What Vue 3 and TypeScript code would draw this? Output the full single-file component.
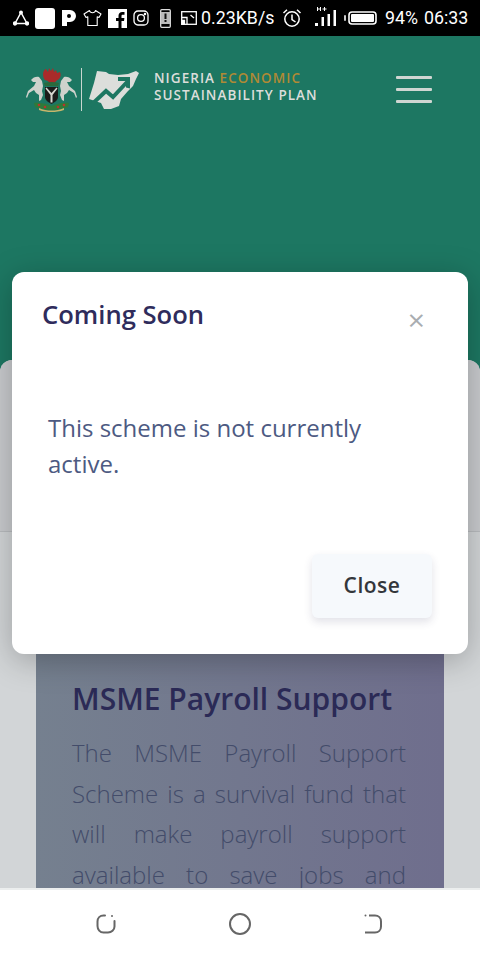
<template>
  <div class="screen">
    <div class="status-bar">
      <svg class="ico" width="16" height="16" viewBox="0 0 16 16" fill="none" stroke="#fff" stroke-width="1.5">
        <path d="M8 2.500 14 13.500H2Z" />
        <circle cx="8" cy="2.500" r="1.200" fill="#fff" />
        <circle cx="2" cy="13.500" r="1.400" fill="#fff" />
        <circle cx="14" cy="13.500" r="1.400" fill="#fff" />
      </svg>
      <span class="white-square"></span>
      <svg class="ico" width="16" height="18" viewBox="0 0 16 18">
        <path fill="#fff" fill-rule="evenodd" d="M1 1h8a6 6 0 0 1 6 6 6 6 0 0 1-6 6H6v4H1ZM8 5a2 2 0 1 0 0 4 2 2 0 0 0 0-4Z" />
      </svg>
      <svg class="ico" width="19" height="18" viewBox="0 0 19 18" fill="none" stroke="#fff" stroke-width="1.1" stroke-linejoin="round">
        <path d="M6.500 1.500 1 5l2 3.500 1.800-.8V16.500h9.400V7.700l1.800.8L18 5l-5.500-3.500c-.6 3-5.400 3-6 0Z" />
      </svg>
      <svg class="ico" width="19" height="19" viewBox="0 0 19 19">
        <path fill="#fff" fill-rule="evenodd" d="M0 0h19v19h-5.500v-7H16l.4-3h-2.900V7.200c0-.9.300-1.400 1.500-1.400h1.500V3.100c-.7-.1-1.500-.1-2.200-.1-2.300 0-3.800 1.300-3.800 3.800V9H8v3h2.500v7H0Z" />
      </svg>
      <svg class="ico" width="16" height="16" viewBox="0 0 16 16" fill="none" stroke="#fff" stroke-width="1.3">
        <rect x="1" y="1" width="14" height="14" rx="4" />
        <circle cx="8" cy="8" r="3.400" />
        <circle cx="12" cy="4" r=".6" fill="#fff" />
      </svg>
      <svg class="ico phone" width="11" height="19" viewBox="0 0 11 19">
        <rect x=".7" y=".7" width="9.600" height="17.600" rx="1" fill="none" stroke="#ddd" stroke-width="1.300" />
        <rect x="1" y="3" width="9" height="12" fill="#bbb" />
        <path d="M4.500 4.500h2v5.500h-2ZM4.500 11h2v2h-2Z" fill="#111" />
      </svg>
      <svg class="ico cast" width="16" height="14" viewBox="0 0 16 14" fill="none" stroke="#fff" stroke-width="1.300">
        <rect x=".7" y=".7" width="14.600" height="12.600" />
        <path d="M1 6.500 6 6.500v6.500M9.500 4 13 7" />
        <path d="M1 9.500h2.500v3.500H1Z" fill="#fff" />
      </svg>
      <span class="status-text speed">0.23KB/s</span>
      <svg class="ico alarm" width="20" height="20" viewBox="0 0 20 20" fill="none" stroke="#fff" stroke-width="1.500">
        <circle cx="10" cy="11" r="7.200" />
        <path d="M10 6.500V11.500L13.500 14" />
        <path d="M1.500 5 5 1.800M18.500 5 15 1.800" />
      </svg>
      <svg class="ico signal" width="23" height="22" viewBox="0 0 23 22" fill="#fff">
        <rect x="2" y="16" width="3" height="3" />
        <rect x="8.500" y="10" width="2.500" height="9" />
        <rect x="14.500" y="7" width="2.500" height="12" />
        <rect x="20.500" y="3" width="2.500" height="16" />
        <path d="M4 0h1v1.500h2V0h1v4H7V2.500H5V4H4ZM9.500 1.500H11V0h1v1.500h1.500v1H12V4h-1V2.500H9.500Z" />
      </svg>
      <svg class="ico battery" width="33" height="14" viewBox="0 0 33 14">
        <rect x="0" y="4" width="2" height="6" rx="1" fill="#ccc" />
        <rect x="5" y="1" width="27" height="12" rx="3" fill="none" stroke="#fff" stroke-width="1.600" />
        <rect x="7" y="3" width="23" height="8" rx="1" fill="#fff" />
      </svg>
      <span class="status-text level">94%</span>
      <span class="status-text clock">06:33</span>
    </div>

    <div class="page">
      <header class="top-bar">
        <div class="brand">
          <!-- 国徽：简化绘制 -->
          <svg class="arms" width="52" height="46" viewBox="0 0 52 46">
            <path d="M18 7c0-3 2-5 3-5l2 3 1-4 2 3 2-3 1 4 2-2 1 3 3-1c1 2 1 5-1 7l-3 2-2 3-2-1-2 1-2-3-3-1c-1-1-2-3-2-6Z" fill="#a92b2a" />
            <path d="M19 16c5-1.500 10-1.500 15 0l-1 3H20Z" fill="#2a6a3c" />
            <g fill="#cfd2cc">
              <path id="horse" d="M6 13C8 10 12 9 14 10L17 14 18 19 17 24 18 28 16 33 14 34V28L11 26 9 23 4 26 2 31 1 30 3 24 9 19 11 15 8 15Z" />
              <path transform="translate(53 0) scale(-1 1)" d="M6 13C8 10 12 9 14 10L17 14 18 19 17 24 18 28 16 33 14 34V28L11 26 9 23 4 26 2 31 1 30 3 24 9 19 11 15 8 15Z" />
            </g>
            <path d="M20 20h13v10c0 3-3 5-6.500 7-3.500-2-6.500-4-6.500-7Z" fill="#1b1c1a" />
            <path d="M21.500 20.500l5 5.500 5-5.500 1 1-5 6.500v7.500h-2V28l-5-6.500Z" fill="#d5d7d0" />
            <path d="M9 36c6-1 12 1 17.500 3 5.500-2 11.500-4 17.500-3l-1 4c-5 2-11 3-16.500 3s-11.500-1-16.500-3Z" fill="#2f7a3a" />
            <circle cx="14" cy="38" r="1.300" fill="#b8322c" />
            <circle cx="20" cy="40" r="1.300" fill="#b8322c" />
            <circle cx="33" cy="40" r="1.300" fill="#b8322c" />
            <circle cx="39" cy="38" r="1.300" fill="#b8322c" />
            <path d="M14 41c4 2 8.500 2.500 12.500 2.500s8.500-.5 12.500-2.500v2c-4 1.500-8.500 2-12.500 2s-8.500-.5-12.500-2Z" fill="#c8b66a" />
          </svg>
          <span class="brand-rule"></span>
          <svg class="map" width="50" height="40" viewBox="0 0 50 40">
            <path d="M8 1 17 2 20 4 29 5 39 4 47 1 50 3 47 9 44 16 39 21 32 29 30 36 22 39 15 39 12 33 0 29 5 13Z" fill="#dcdedb" />
            <path d="M1 36 17 21l7 6 15-16" fill="none" stroke="#1d7762" stroke-width="4" />
            <path d="M29 7h12v11.500l-4-1V11h-8Z" fill="#1d7762" />
          </svg>
          <div class="brand-name">
            <div>NIGERIA <span class="accent">ECONOMIC</span></div>
            <div>SUSTAINABILITY PLAN</div>
          </div>
        </div>
        <div class="burger">
          <span></span>
          <span></span>
          <span></span>
        </div>
      </header>

      <section class="sheet">
        <div class="sheet-top"></div>
        <article class="scheme-card">
          <h2>MSME Payroll Support</h2>
          <p>
            The MSME Payroll Support Scheme is a survival fund that will make payroll support
            available to save jobs and protect businesses across the country.
          </p>
        </article>
      </section>

      <div class="modal">
        <div class="modal-head">
          <h3>Coming Soon</h3>
          <span class="modal-x">×</span>
        </div>
        <p class="modal-body">This scheme is not currently active.</p>
        <div class="modal-foot">
          <button class="close-btn" type="button">Close</button>
        </div>
      </div>
    </div>

    <div class="nav-bar">
      <svg width="22" height="22" viewBox="0 0 22 22" fill="none" stroke="#666" stroke-width="2">
        <path d="M10 2.500H8.500C5 2.500 2.500 5 2.500 8.500V13C2.500 16.500 5 19.500 8.500 19.500H13C16.500 19.500 19.500 17 19.500 13.500V8" stroke-linecap="round" />
        <circle cx="17" cy="3" r="1" fill="#666" stroke="none" />
      </svg>
      <svg width="24" height="24" viewBox="0 0 24 24" fill="none" stroke="#666" stroke-width="2">
        <circle cx="12" cy="12" r="10" />
      </svg>
      <svg width="20" height="22" viewBox="0 0 20 22" fill="none" stroke="#666" stroke-width="2">
        <path d="M6 2.500H12C15.500 2.500 18 5 18 8.500V13.500C18 17 15.500 19.500 12 19.500H2" />
        <circle cx="2.500" cy="2.500" r="1" fill="#666" stroke="none" />
      </svg>
    </div>
  </div>
</template>

<script setup lang="ts">
// 静态页面，弹窗保持打开状态
</script>

<style>
html,
body {
  margin: 0;
  background: #fff;
}
</style>

<style scoped>
.screen {
  width: 480px;
  height: 960px;
  display: flex;
  flex-direction: column;
  overflow: hidden;
  font-family: "Open Sans", "Noto Sans", sans-serif;
}

.status-bar {
  height: 36px;
  flex: none;
  display: flex;
  align-items: center;
  padding-left: 13px;
  background: #000;
  color: #fff;
}

.ico {
  flex: none;
  margin-right: 6px;
}

.white-square {
  width: 20px;
  height: 21px;
  margin-right: 6px;
  border-radius: 3px;
  background: #fff;
}

.phone {
  margin-left: 5px;
  margin-right: 10px;
}

.cast {
  margin-right: 4px;
}

.status-text {
  font-family: Roboto, sans-serif;
  font-size: 17.800px;
  line-height: 36px;
  white-space: nowrap;
}

.speed {
  width: 81px;
}

.alarm {
  margin-right: 11px;
}

.signal {
  margin-right: 8px;
}

.battery {
  margin-right: 8px;
}

.level {
  width: 39px;
}

.page {
  position: relative;
  flex: 1;
  min-height: 0;
  display: flex;
  flex-direction: column;
  overflow: hidden;
  background: #1d7762;
}

.top-bar {
  height: 324px;
  flex: none;
  display: flex;
  align-items: flex-start;
  justify-content: space-between;
  padding: 31px 48px 0 25px;
  box-sizing: border-box;
}

.brand {
  display: flex;
  align-items: center;
  height: 45px;
}

.arms {
  flex: none;
}

.brand-rule {
  width: 1px;
  height: 43px;
  margin: 0 7px 0 4px;
  background: #c9d6d0;
}

.map {
  flex: none;
}

.brand-name {
  margin: 0 0 6px 15px;
  color: #dcdedb;
  font-size: 13.500px;
  font-weight: 600;
  line-height: 16.400px;
  letter-spacing: 1.050px;
  white-space: nowrap;
}

.accent {
  color: #b08a35;
}

.burger {
  width: 36px;
  display: flex;
  flex-direction: column;
  gap: 9px;
  padding-top: 9px;
}

.burger span {
  height: 3px;
  border-radius: 1px;
  background: #cfd6d2;
}

.sheet {
  flex: 1;
  min-height: 0;
  border-radius: 12px 12px 0 0;
  background: #d2d5d7;
  overflow: hidden;
}

.sheet-top {
  height: 171px;
  border-bottom: 1px solid #b9bcbf;
  background: #c9cbce;
}

.scheme-card {
  margin: 0 36px;
  padding: 76px 38px 0 36px;
  height: 400px;
  background: linear-gradient(90deg, #75808f, #6f6e8d);
}

.scheme-card h2 {
  margin: 0;
  padding-top: 72px;
  color: #2b2a56;
  font-size: 30px;
  font-weight: 600;
  line-height: 38px;
  white-space: nowrap;
}

.scheme-card p {
  margin: 15px 0 0;
  color: #434c6a;
  font-size: 24px;
  font-weight: 300;
  line-height: 40.700px;
  text-align: justify;
}

.modal {
  position: absolute;
  top: 236px;
  left: 12px;
  width: 456px;
  height: 382px;
  display: flex;
  flex-direction: column;
  box-sizing: border-box;
  border-radius: 12px;
  background: #fff;
  box-shadow: 0 6px 32px rgba(0, 0, 0, 0.26);
}

.modal-head {
  display: flex;
  justify-content: space-between;
  padding: 26px 43px 0 30px;
}

.modal-head h3 {
  margin: 0;
  color: #2f2c5c;
  font-size: 25.600px;
  font-weight: 600;
  line-height: 34px;
}

.modal-x {
  color: #a9adb1;
  font-size: 30px;
  line-height: 44px;
}

.modal-body {
  margin: 68px 0 0;
  padding: 0 36px;
  color: #4d5a82;
  font-size: 24px;
  line-height: 36px;
}

.modal-foot {
  margin-top: auto;
  display: flex;
  justify-content: flex-end;
  padding: 0 36px 36px;
}

.close-btn {
  width: 120px;
  height: 64px;
  padding: 0 0 2px;
  border: 0;
  border-radius: 6px;
  background: #f6f9fc;
  color: #33363b;
  font-family: inherit;
  font-size: 21px;
  font-weight: 600;
  letter-spacing: 0.500px;
  box-shadow: 0 4px 8px rgba(50, 50, 93, 0.14);
}

.nav-bar {
  height: 72px;
  flex: none;
  display: flex;
  align-items: center;
  justify-content: space-between;
  padding: 0 97px 2px 95px;
  box-sizing: border-box;
  border-top: 2px solid #eceeee;
  background: #fff;
}
</style>
